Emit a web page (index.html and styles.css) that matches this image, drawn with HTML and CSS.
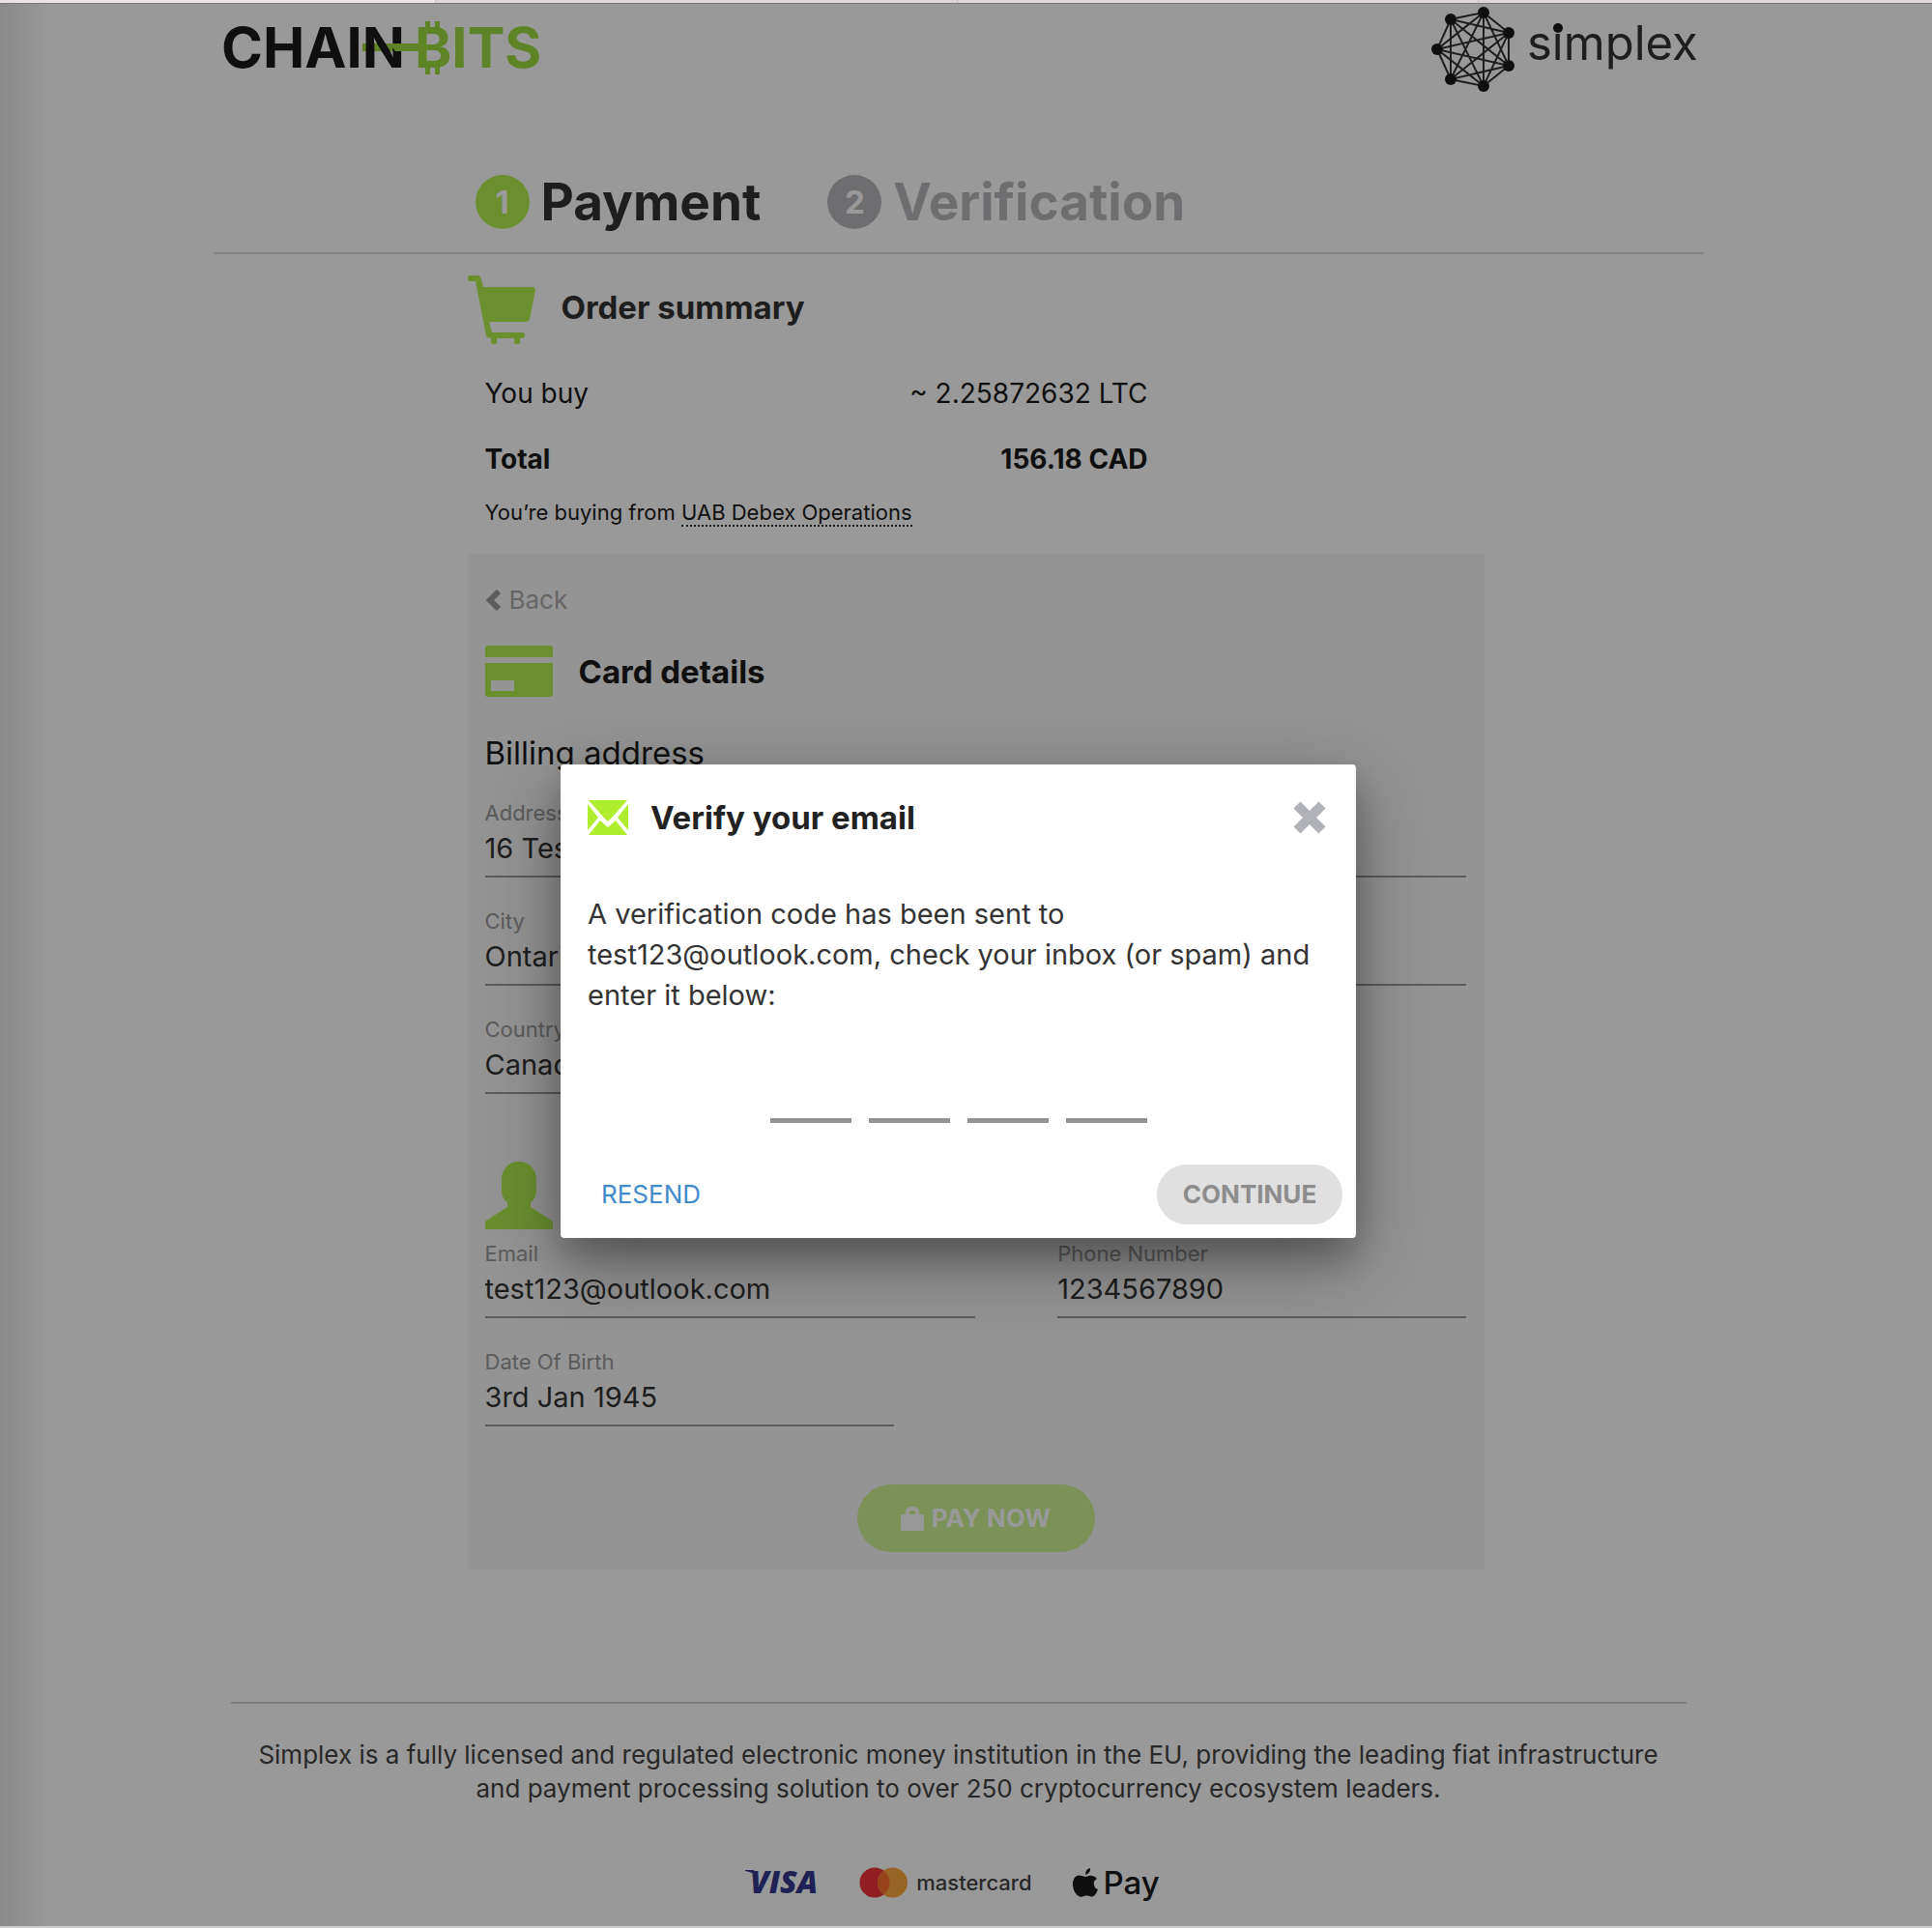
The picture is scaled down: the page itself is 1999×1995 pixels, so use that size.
FILE: index.html
```html
<!DOCTYPE html>
<html lang="en">
<head>
<meta charset="utf-8">
<meta name="viewport" content="width=device-width, initial-scale=1">
<title>Payment</title>
<link rel="stylesheet" href="styles.css">
</head>
<body>
<div class="tabstrip"><span class="tab tab-active"></span><span class="tab"></span><span class="tab"></span></div>
<div class="page">
  <div class="container">
    <header class="header">
      <svg class="brand" width="344" height="80" viewBox="0 -9 344 80" role="img" aria-label="Chainbits">
        <path class="lime" d="M154 26h50v8h-50z"/>
        <text class="brand-text" x="8" y="51">CHAIN</text>
        <path class="lime" d="M182 26h34v8h-28z M219 3h5v9h-5z M229 3h5v9h-5z M219 49h5v9h-5z M229 49h5v9h-5z"/>
        <text class="brand-text lime" x="208" y="51">BITS</text>
      </svg>
      <svg width="282" height="88" viewBox="0 0 282 88" role="img" aria-label="Simplex">
        <path class="mesh" d="M54 6L80 27L80 61L54 82L20 75L6 44L20 13Z M54 6L80 61L20 75L20 13L80 27L54 82L6 44Z M54 6L54 82L20 13L80 61L6 44L80 27L20 75Z"/>
        <g fill="#191919"><circle cx="54" cy="6" r="6"/><circle cx="80" cy="27" r="6"/><circle cx="80" cy="61" r="6"/><circle cx="54" cy="82" r="6"/><circle cx="20" cy="75" r="6"/><circle cx="6" cy="44" r="6"/><circle cx="20" cy="13" r="6"/></g>
        <text class="simplex-text" x="99" y="55">simplex</text>
        <circle cx="131" cy="22" r="5" fill="#191919"/>
      </svg>
    </header>

    <ol class="steps">
      <li class="step step-current"><span class="step-num">1</span>Payment</li>
      <li class="step"><span class="step-num">2</span>Verification</li>
    </ol>

    <main class="main">
      <section class="summary">
        <div class="title-row">
          <svg width="70" height="71" viewBox="0 0 70 71" fill="#b3ef4f"><path d="M3 0h7q3 0 4 4l2 8h51q3 0 3 3l-6 30q-1 3-4 3H22l3 11h31q3 0 3 3t-3 3h-2v4q0 2-3 2t-3-2v-4H30v4q0 2-3 2t-3-2v-4q-4 0-5-3L8 6H3Q0 6 0 3t3-3z"/></svg>
          <h2 class="title">Order summary</h2>
        </div>
        <dl class="amounts">
          <div class="amount"><dt>You buy</dt><dd>~ 2.25872632 LTC</dd></div>
          <div class="amount total"><dt>Total</dt><dd>156.18 CAD</dd></div>
        </dl>
        <p class="seller">You’re buying from <a href="#">UAB Debex Operations</a></p>
      </section>

      <form class="panel">
        <a class="back" href="#"><svg width="17" height="22" viewBox="0 0 17 22"><path d="M14 2L5 11l9 9" fill="none" stroke="#999" stroke-width="6"/></svg>Back</a>
        <div class="title-row card-title">
          <svg width="70" height="53" viewBox="0 0 70 53" fill="#b3ef4f"><path fill-rule="evenodd" d="M3 0h64q3 0 3 3v9H0V3q0-3 3-3zM0 18h70v32q0 3-3 3H3q-3 0-3-3zM6 36v11h24V36z"/></svg>
          <h2 class="title">Card details</h2>
        </div>
        <h3 class="subtitle">Billing address</h3>
        <div class="fields">
          <div class="field wide"><label for="address">Address</label><input id="address" value="16 Test Street"></div>
          <div class="field wide"><label for="city">City</label><input id="city" value="Ontario"></div>
          <div class="field"><label for="country">Country</label><input id="country" value="Canada"></div>
        </div>
        <svg class="person" width="70" height="70" viewBox="0 0 70 70" fill="#b3ef4f"><path d="M35 0C46 0 53 8 53 19v11c0 6-3 10-6 12v5l22 14q1 1 1 3v5q0 1-1 1H1q-1 0-1-1v-5q0-2 1-3l22-14v-5c-3-2-6-6-6-12V19C17 8 24 0 35 0z"/></svg>
        <div class="fields">
          <div class="field half"><label for="email">Email</label><input id="email" type="email" value="test123@outlook.com"></div>
          <div class="field right"><label for="phone">Phone Number</label><input id="phone" type="tel" value="1234567890"></div>
          <div class="field"><label for="dob">Date Of Birth</label><input id="dob" value="3rd Jan 1945"></div>
        </div>
        <button class="pay" type="button"><svg width="24" height="25" viewBox="0 0 24 25"><path fill="#fff" fill-rule="evenodd" d="M5 8V6q0-6 6-6h2q6 0 6 6v2h3q2 0 2 2v13q0 2-2 2H2q-2 0-2-2V10q0-2 2-2zM9 8h6V6q0-2-2-2h-2q-2 0-2 2z"/></svg>PAY NOW</button>
      </form>
    </main>

    <footer class="footer">
      <p>Simplex is a fully licensed and regulated electronic money institution in the EU, providing the leading fiat infrastructure and payment processing solution to over 250 cryptocurrency ecosystem leaders.</p>
      <div class="brands">
        <svg width="76" height="44" viewBox="0 -4 76 44" role="img" aria-label="Visa"><path d="M0 5h9l4 9q-4-7-13-8z" fill="#34368c"/><text class="visa" x="5" y="29">VISA</text></svg>
        <span class="mastercard"><svg width="50" height="32" viewBox="0 0 50 32"><circle cx="16" cy="16" r="15.500" fill="#f1333b"/><circle cx="34.500" cy="16" r="15.500" fill="#faa73c"/><path d="M25.250 3.500a15.500 15.500 0 0 1 0 25a15.500 15.500 0 0 1 0-25z" fill="#fc6e2c"/></svg>mastercard</span>
        <span class="applepay"><svg width="26" height="30" viewBox="0 0 26 30"><path d="M18 0q1 5-5 7q0-6 5-7zM13 9c2 0 4-2 7-1q3 0 5 3q-4 2-3 6q0 4 4 5c-2 5-4 8-7 7.500q-5-2-9 0C5 31 0 24 0 17C0 10 4 6 9 8z"/></svg>Pay</span>
      </div>
    </footer>
  </div>

  <div class="overlay">
    <section class="modal" role="dialog" aria-labelledby="modal-title">
      <header class="modal-head">
        <svg width="42" height="36" viewBox="0 0 42 36" fill="#aeee2f"><path d="M1 0h40L26 17l-5 5-5-5zM0 4l11 14L0 31zM42 4v27L31 18zM1 36l12-15 8 7 8-7 12 15z"/></svg>
        <h2 class="title" id="modal-title">Verify your email</h2>
        <button class="close" type="button" aria-label="Close"><svg width="36" height="36" viewBox="0 0 36 36"><path d="M5 5l26 26M31 5L5 31" stroke="#b0b2b7" stroke-width="10"/></svg></button>
      </header>
      <p class="modal-text">A verification code has been sent to test123@outlook.com, check your inbox (or spam) and enter it below:</p>
      <div class="code">
        <input aria-label="Digit 1" maxlength="1"><input aria-label="Digit 2" maxlength="1"><input aria-label="Digit 3" maxlength="1"><input aria-label="Digit 4" maxlength="1">
      </div>
      <div class="actions"><button class="resend" type="button">RESEND</button><button class="continue" type="button">CONTINUE</button></div>
    </section>
  </div>
</div>
</body>
</html>
```
FILE: styles.css
```css
* { box-sizing: border-box; }
body {
  margin: 0;
  min-height: 100vh;
  display: flex;
  flex-direction: column;
  background: #ccc;
  color: #191919;
  font-family: Inter, "Liberation Sans", sans-serif;
  font-size: 29px;
  line-height: 40px;
}
h2, h3, p, ol, dl, dd { margin: 0; padding: 0; }
button, input { font: inherit; border: 0; border-radius: 0; background: none; padding: 0; }
svg { display: block; flex: none; }

.tabstrip { display: flex; height: 4px; border-bottom: 1px solid #777; background: #dfd6dc; }
.tab { flex: 0 0 27%; border-right: 1px solid #c3bcc1; }
.tab-active { flex-basis: 451px; background: #ebe4e9; }

.page { position: relative; flex: 1; background: #fff; padding: 3px 16px 27px 0; margin-bottom: 2px; }
.container { width: 78%; max-width: 1542px; margin: 0 auto; }

.header { display: flex; justify-content: space-between; }
.brand { margin-top: 3px; }
.brand-text { font-size: 58px; font-weight: 700; fill: #191919; }
.brand .lime { fill: #9fdc42; }
.mesh { fill: none; stroke: #333; stroke-width: 2; }
.simplex-text { font-size: 49px; fill: #333; }

.steps {
  display: flex;
  gap: 69px;
  margin-top: 86px;
  padding: 0 0 24px 271px;
  border-bottom: 2px solid #dcdcdc;
  list-style: none;
}
.step { display: flex; align-items: center; gap: 12px; font-size: 53px; line-height: 56px; font-weight: 700; color: #b7b8bb; }
.step-current { color: #333; }
.step-num { width: 56px; height: 56px; border-radius: 50%; background: #b7b8bb; color: #fff; font-size: 33px; text-align: center; }
.step-current .step-num { background: #b3ef4f; }

.main { display: grid; grid-template-columns: 263px minmax(0, 1052px) 1fr; }
.summary, .panel { grid-column: 2; }
.summary { padding: 22px 0 28px; }
.title-row { display: flex; gap: 27px; align-items: center; }
.title { font-size: 33px; font-weight: 700; }
.summary .title { padding-bottom: 6px; color: #333; }
.amounts { width: 704px; padding: 31px 0 20px 18px; display: grid; gap: 28px; font-size: 28px; }
.amount { display: flex; justify-content: space-between; }
.total { font-weight: 700; }
.seller { padding-left: 18px; font-size: 22px; line-height: 30px; }
.seller a { color: inherit; text-decoration: none; border-bottom: 2px dotted #333; }

.panel { background: #f7f7f7; padding: 33px 18px 18px; }
.back { display: flex; width: fit-content; align-items: center; gap: 8px; font-size: 26px; line-height: 30px; color: #aaa; text-decoration: none; }
.card-title { margin-top: 32px; }
.subtitle { margin: 38px 0 30px; font-size: 33px; font-weight: 400; }
.fields { display: grid; grid-template-columns: 5fr 1fr 1fr 5fr; row-gap: 33px; }
.field { grid-column: 1; display: flex; flex-direction: column; }
.field.wide { grid-column: 1 / -1; }
.field.half { grid-column: 1 / 3; }
.field.right { grid-column: 4; }
.field label { font-size: 22px; line-height: 24px; color: #999; }
.field input { width: 100%; height: 55px; padding-bottom: 5px; border-bottom: 2px solid #999; color: #333; outline: 0; }
.person { margin: 70px 0 13px; }
.pay {
  display: flex;
  align-items: center;
  justify-content: center;
  gap: 8px;
  width: 246px;
  height: 70px;
  margin: 60px auto 0;
  border-radius: 35px;
  background: #cdf293;
  color: #fff;
  font-size: 26px;
  font-weight: 700;
}

.footer { margin: 137px 18px 0; padding-top: 35px; border-top: 2px solid #d2d2d2; text-align: center; font-size: 26px; line-height: 35px; color: #444; }
.footer p { padding: 0 18px; }
.brands { display: flex; justify-content: center; align-items: center; gap: 42px; height: 36px; margin-top: 62px; padding-right: 12px; color: #191919; }
.visa { font-family: "Open Sans", sans-serif; font-size: 32px; font-weight: 800; font-style: italic; fill: #34368c; }
.mastercard, .applepay { display: flex; align-items: center; gap: 9px; }
.mastercard { font-size: 22px; font-weight: 500; color: #444; }
.applepay { font-size: 33px; font-weight: 500; gap: 6px; }
.applepay svg { fill: #191919; }

.overlay {
  position: absolute;
  inset: 0;
  display: flex;
  align-items: center;
  justify-content: center;
  padding: 75px 16px 0 0;
  background: linear-gradient(90deg, rgba(0, 0, 0, .1), transparent 50px), rgba(0, 0, 0, .4);
}
.modal { width: 823px; max-width: 90%; padding: 35px 14px 14px 28px; border-radius: 4px; background: #fff; color: #222; box-shadow: 0 24px 76px rgba(0, 0, 0, .38), 0 20px 30px rgba(0, 0, 0, .16); }
.modal-head { display: flex; align-items: center; gap: 23px; padding-right: 16px; }
.close { margin-left: auto; }
.modal-text { margin-top: 59px; padding-right: 10px; line-height: 42px; color: #333; }
.code { display: flex; justify-content: center; gap: 18px; margin: 54px 14px 43px 0; }
.code input { width: 84px; height: 57px; border-bottom: 5px solid #939393; text-align: center; }
.actions { display: flex; justify-content: space-between; align-items: center; font-size: 26px; }
.resend { padding: 0 14px; color: #428bca; }
.continue { width: 192px; height: 62px; border-radius: 31px; background: #e0e0e0; color: #8d8d8d; font-weight: 700; }
```
